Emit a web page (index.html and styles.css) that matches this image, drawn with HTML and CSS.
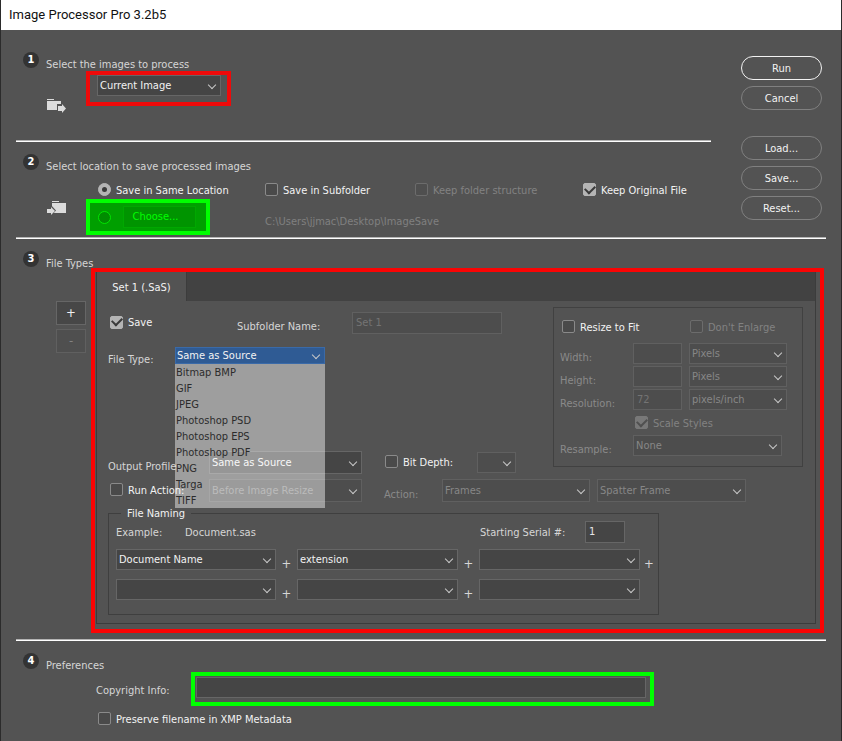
FILE: index.html
```html
<!DOCTYPE html>
<html lang="en">
    <head>
        <meta charset="utf-8">
        <title>Image Processor Pro 3.2b5</title>
        <link rel="stylesheet" href="styles.css">
    </head>
    <body>
        <div class="window">
            <h1 class="titlebar">Image Processor Pro 3.2b5</h1>

            <form class="content">
                <div class="top">
                    <div class="top-left">
                        <!-- step 1 -->
                        <section class="step step-first">
                            <div class="step-head">
                                <span class="badge">1</span>
                                <h2 class="step-title">Select the images to process</h2>
                            </div>
                            <div class="step-body source-body">
                                <svg class="folder folder-low" width="20" height="15" viewBox="0 0 20 15">
                                    <path d="M0 0h7v1H0zM0 2h14v9H0z" fill="#dcdcdc"/>
                                    <path d="M10 5h4V3l6 6.500l-6 5.500v-3h-4z" fill="#535353"/>
                                    <path d="M11 7h4V5l4 4.500l-4 4.500v-2h-4z" fill="#dcdcdc"/>
                                </svg>
                                <div class="mark mark-red mark-source">
                                    <span class="select select-source">
                                        <select aria-label="Images to process"><option>Current Image</option></select>
                                    </span>
                                </div>
                            </div>
                        </section>

                        <hr class="line">

                        <!-- step 2 -->
                        <section class="step">
                            <div class="step-head">
                                <span class="badge">2</span>
                                <h2 class="step-title">Select location to save processed images</h2>
                            </div>
                            <div class="step-body location-body">
                                <svg class="folder folder-mid" width="20" height="15" viewBox="0 0 20 15">
                                    <path d="M5 0h7v1H5zM5 2h14v10H5z" fill="#dcdcdc"/>
                                    <path d="M0 6h4V4l5 5.500l-5 5.500v-3H0z" fill="#535353"/>
                                    <path d="M0 8h4V6l4 4l-4 4v-2H0z" fill="#dcdcdc"/>
                                </svg>
                                <div class="location">
                                    <label class="check check-indent"><input type="radio" name="location" checked>Save in Same Location</label>
                                    <label class="check"><input type="checkbox">Save in Subfolder</label>
                                    <label class="check"><input type="checkbox" disabled>Keep folder structure</label>
                                    <label class="check"><input type="checkbox" checked>Keep Original File</label>
                                    <div class="mark mark-green mark-choose">
                                        <input type="radio" name="location" aria-label="Save in chosen folder">
                                        <button type="button" class="choose">Choose...</button>
                                    </div>
                                    <span class="path">C:\Users\jjmac\Desktop\ImageSave</span>
                                </div>
                            </div>
                        </section>
                    </div>

                    <div class="actions">
                        <button type="button" class="pill pill-main">Run</button>
                        <button type="button" class="pill">Cancel</button>
                        <button type="button" class="pill pill-gap">Load...</button>
                        <button type="button" class="pill">Save...</button>
                        <button type="button" class="pill">Reset...</button>
                    </div>
                </div>

                <hr class="line">

                <!-- step 3 -->
                <section class="step">
                    <div class="step-head">
                        <span class="badge">3</span>
                        <h2 class="step-title">File Types</h2>
                    </div>
                    <div class="types">
                        <div class="set-buttons">
                            <button type="button" class="square">+</button>
                            <button type="button" class="square" disabled>-</button>
                        </div>
                        <div class="mark mark-red mark-types">
                            <div class="panel">
                                <div class="tabs">
                                    <button type="button" class="tab">Set 1 (.SaS)</button>
                                </div>

                                <div class="panel-top">
                                    <div class="panel-form">
                                        <div class="row row-save">
                                            <label class="check save-check"><input type="checkbox" checked>Save</label>
                                            <label class="label" for="subfolder">Subfolder Name:</label>
                                            <input class="text" type="text" id="subfolder" value="Set 1" disabled>
                                        </div>
                                        <div class="row row-type">
                                            <label class="label" for="filetype">File Type:</label>
                                            <div class="open-list">
                                                <span class="select select-active">
                                                    <select id="filetype"><option>Same as Source</option></select>
                                                </span>
                                                <ul class="options">
                                                    <li>Bitmap BMP</li>
                                                    <li>GIF</li>
                                                    <li>JPEG</li>
                                                    <li>Photoshop PSD</li>
                                                    <li>Photoshop EPS</li>
                                                    <li>Photoshop PDF</li>
                                                    <li>PNG</li>
                                                    <li>Targa</li>
                                                    <li>TIFF</li>
                                                </ul>
                                            </div>
                                        </div>
                                        <div class="row row-profile">
                                            <label class="label" for="profile">Output Profile:</label>
                                            <span class="select select-tall">
                                                <select id="profile"><option>Same as Source</option></select>
                                            </span>
                                            <label class="check depth-check"><input type="checkbox">Bit Depth:</label>
                                            <span class="select">
                                                <select aria-label="Bit depth" disabled><option></option></select>
                                            </span>
                                        </div>
                                    </div>

                                    <div class="resize">
                                        <div class="resize-head">
                                            <label class="check"><input type="checkbox">Resize to Fit</label>
                                            <label class="check"><input type="checkbox" disabled>Don't Enlarge</label>
                                        </div>
                                        <div class="resize-grid">
                                            <label class="label dim" for="width">Width:</label>
                                            <input class="text" type="text" id="width" disabled>
                                            <span class="select">
                                                <select aria-label="Width unit" disabled><option>Pixels</option></select>
                                            </span>
                                            <label class="label dim" for="height">Height:</label>
                                            <input class="text" type="text" id="height" disabled>
                                            <span class="select">
                                                <select aria-label="Height unit" disabled><option>Pixels</option></select>
                                            </span>
                                            <label class="label dim" for="resolution">Resolution:</label>
                                            <input class="text" type="text" id="resolution" value="72" disabled>
                                            <span class="select">
                                                <select aria-label="Resolution unit" disabled><option>pixels/inch</option></select>
                                            </span>
                                        </div>
                                        <label class="check scale-check"><input type="checkbox" checked disabled>Scale Styles</label>
                                        <div class="resample">
                                            <label class="label dim" for="resample">Resample:</label>
                                            <span class="select">
                                                <select id="resample" disabled><option>None</option></select>
                                            </span>
                                        </div>
                                    </div>
                                </div>

                                <div class="row row-action">
                                    <label class="check check-run"><input type="checkbox">Run Action:</label>
                                    <span class="select select-tall">
                                        <select aria-label="When to run" disabled><option>Before Image Resize</option></select>
                                    </span>
                                    <label class="label dim action-label" for="action">Action:</label>
                                    <span class="select select-tall">
                                        <select id="action" disabled><option>Frames</option></select>
                                    </span>
                                    <span class="select select-tall action-name">
                                        <select aria-label="Action name" disabled><option>Spatter Frame</option></select>
                                    </span>
                                </div>

                                <fieldset class="naming">
                                    <legend>File Naming</legend>
                                    <div class="row naming-head">
                                        <span>Example:</span>
                                        <span>Document.sas</span>
                                        <label for="serial">Starting Serial #:</label>
                                        <input class="text" type="text" id="serial" value="1">
                                    </div>
                                    <div class="naming-grid">
                                        <span class="select"><select aria-label="Name part 1"><option>Document Name</option></select></span>
                                        <span class="label plus">+</span>
                                        <span class="select"><select aria-label="Name part 2"><option>extension</option></select></span>
                                        <span class="label plus">+</span>
                                        <span class="select"><select aria-label="Name part 3"><option></option></select></span>
                                        <span class="label plus">+</span>
                                        <span class="select"><select aria-label="Name part 4"><option></option></select></span>
                                        <span class="label plus">+</span>
                                        <span class="select"><select aria-label="Name part 5"><option></option></select></span>
                                        <span class="label plus">+</span>
                                        <span class="select"><select aria-label="Name part 6"><option></option></select></span>
                                    </div>
                                </fieldset>
                            </div>
                        </div>
                    </div>
                </section>

                <hr class="line">

                <!-- step 4 -->
                <section class="step">
                    <div class="step-head">
                        <span class="badge">4</span>
                        <h2 class="step-title">Preferences</h2>
                    </div>
                    <div class="prefs">
                        <div class="row copyright">
                            <label for="copyright">Copyright Info:</label>
                            <div class="mark mark-green mark-copyright">
                                <input class="text" type="text" id="copyright">
                            </div>
                        </div>
                        <label class="check xmp-check"><input type="checkbox">Preserve filename in XMP Metadata</label>
                    </div>
                </section>
            </form>
        </div>
    </body>
</html>
```
FILE: styles.css
```css
* {
    box-sizing: border-box;
    margin: 0;
    padding: 0;
}

body {
    background-color: #535353;
    color: #d6d6d6;
    font-family: Tahoma, "DejaVu Sans Condensed", sans-serif;
    font-size: 11px;
    line-height: 14px;
}

button,
input,
select {
    font: inherit;
    color: inherit;
}

.window {
    min-height: 100vh;
    border: 1px solid #2b2b2b;
    border-top: 0;
}

.titlebar {
    height: 30px;
    padding-left: 8px;
    background-color: #ffffff;
    color: #111111;
    font-family: "Segoe UI", Roboto, sans-serif;
    font-size: 13px;
    font-weight: 400;
    line-height: 30px;
}

.content {
    padding: 0 15px 14px;
}

.line {
    height: 2px;
    border: 0;
    border-top: 1px solid #b4b4b4;
    background-color: #ffffff;
}

/* steps */
.top {
    display: grid;
    grid-template-columns: minmax(0, 1fr) 115px;
}

.step {
    padding-top: 12px;
}

.step-first {
    padding-top: 22px;
}

.step-head {
    display: flex;
    gap: 7px;
    height: 19px;
    padding-left: 7px;
}

.badge {
    width: 16px;
    height: 16px;
    border-radius: 50%;
    background-color: #333333;
    color: #ffffff;
    font-weight: 700;
    line-height: 16px;
    text-align: center;
}

.step-title {
    margin-top: 6px;
    font-size: 11px;
    font-weight: 400;
}

.step-body {
    display: grid;
    grid-template-columns: 70px 1fr;
    align-items: start;
}

.source-body {
    min-height: 69px;
}

.location-body {
    padding: 10px 0 2px;
}

.folder {
    margin-left: 31px;
}

.folder-low {
    margin-top: 28px;
}

.folder-mid {
    margin-top: 18px;
}

/* coloured call-out frames */
.mark {
    border: 4px solid;
}

.mark-red {
    border-color: #ee0a0a;
}

.mark-green {
    border-color: #00ff00;
}

.mark-source {
    width: 145px;
    padding: 0 6px 6px 7px;
}

.mark-choose {
    display: flex;
    align-items: center;
    gap: 12px;
    width: 124px;
    height: 36px;
    padding-left: 8px;
    background-color: #009f00;
}

.choose {
    width: 73px;
    height: 22px;
    padding-right: 8px;
    border: 1px solid #00a800;
    background-color: #009400;
    color: #00ff00;
}

/* controls */
.check {
    display: flex;
    align-items: center;
    gap: 5px;
    color: #f2f2f2;
    white-space: nowrap;
}

.check input {
    margin-bottom: 2px;
}

.check-indent {
    padding-left: 12px;
}

.check:has(input:disabled) {
    color: #828282;
}

input[type="checkbox"],
input[type="radio"] {
    flex: none;
    display: grid;
    place-content: center;
    width: 13px;
    height: 13px;
    border: 1px solid #8a8a8a;
    border-radius: 2px;
    background-color: #4a4a4a;
    appearance: none;
}

input[type="radio"] {
    border-radius: 50%;
}

input[type="radio"]:checked {
    border-color: #b4b4b4;
    background-color: #b4b4b4;
}

input[type="radio"]:checked::before {
    content: "";
    width: 5px;
    height: 5px;
    border-radius: 50%;
    background-color: #3a3a3a;
}

input[type="checkbox"]:checked {
    border-color: #b4b4b4;
    background-color: #b4b4b4;
}

input[type="checkbox"]:checked::before {
    content: "";
    width: 8px;
    height: 5px;
    margin-bottom: 3px;
    border: solid #3a3a3a;
    border-width: 0 0 2px 2px;
    transform: rotate(-45deg);
}

input[type="checkbox"]:disabled {
    border-color: #6c6c6c;
    background-color: #4f4f4f;
}

input[type="checkbox"]:disabled:checked {
    border-color: #787878;
    background-color: #787878;
}

input[type="checkbox"]:disabled:checked::before {
    border-color: #505050;
}

.mark-choose input[type="radio"] {
    border-color: #00e600;
    background-color: #008c00;
}

.select {
    position: relative;
    display: block;
}

.select::after {
    content: "";
    position: absolute;
    top: 50%;
    right: 6px;
    width: 5px;
    height: 5px;
    margin-top: -4px;
    border: solid #c8c8c8;
    border-width: 0 1px 1px 0;
    transform: rotate(45deg);
    pointer-events: none;
}

.select select {
    display: block;
    width: 100%;
    height: 21px;
    padding: 1px 2px 0;
    border: 1px solid #666666;
    border-radius: 0;
    background-color: #454545;
    color: #f2f2f2;
    appearance: none;
}

.select select:disabled {
    border-color: #606060;
    background-color: #4d4d4d;
    color: #878787;
    opacity: 1;
}

.select-tall select {
    height: 23px;
}

.text {
    width: 100%;
    height: 22px;
    padding: 0 3px 1px;
    border: 1px solid #666666;
    background-color: #454545;
    color: #e6e6e6;
}

.text:disabled {
    border-color: #606060;
    background-color: #4d4d4d;
    color: #747474;
}

/* field labels sit a little below the middle of their field */
.label {
    margin-bottom: -8px;
    white-space: nowrap;
}

.dim {
    color: #8a8a8a;
}

.row {
    display: grid;
    align-items: center;
}

/* step 2 */
.location {
    display: grid;
    grid-template-columns: 179px 150px 168px 1fr;
    row-gap: 1px;
    align-items: center;
}

.path {
    grid-column: 2 / 4;
    padding-top: 10px;
    color: #808080;
}

.actions {
    display: flex;
    flex-direction: column;
    gap: 6px;
    padding: 26px 4px 0 30px;
}

.pill {
    height: 24px;
    padding-top: 2px;
    border: 1px solid #808080;
    border-radius: 12px;
    background-color: transparent;
    color: #f2f2f2;
}

.pill-main {
    border-color: #f2f2f2;
}

.pill-gap {
    margin-top: 20px;
}

/* step 3 */
.types {
    display: flex;
    margin: -2px 2px 6px 40px;
}

.set-buttons {
    display: flex;
    flex-direction: column;
    gap: 4px;
    width: 30px;
    margin: 33px 5px 0 0;
}

.square {
    height: 24px;
    border: 1px solid #666666;
    background-color: #474747;
    color: #f2f2f2;
    font-size: 13px;
}

.square:disabled {
    border-color: #606060;
    background-color: #4f4f4f;
    color: #828282;
}

.mark-types {
    flex: 1;
    padding: 0 4px 5px 1px;
    border-color: #fa0404;
}

.panel {
    border: 1px solid #3c3c3c;
    border-top: 0;
    padding-bottom: 8px;
}

.tabs {
    height: 29px;
    background-color: #424242;
}

.tab {
    width: 90px;
    height: 29px;
    padding-top: 2px;
    border: 0;
    border-right: 1px solid #3c3c3c;
    background-color: #535353;
    color: #f2f2f2;
}

.panel-top {
    display: grid;
    grid-template-columns: minmax(0, 1fr) 250px;
    padding-right: 12px;
}

.panel-form {
    padding: 11px 0 0 11px;
}

.row-save {
    grid-template-columns: 129px 115px 150px;
}

.save-check {
    padding-left: 2px;
}

.row-type {
    grid-template-columns: 67px 150px;
    margin-top: 13px;
}

.open-list {
    position: relative;
}

.select-active select {
    height: 17px;
    padding: 1px 1px 0;
    border-color: #3a6aa8;
    background-color: #2f5b94;
}

.options {
    position: absolute;
    top: 100%;
    left: 0;
    z-index: 1;
    width: 100%;
    padding-left: 1px;
    background-color: rgba(255, 255, 255, 0.44);
    color: #2c2c2c;
    line-height: 16px;
    list-style: none;
}

.options li {
    padding-top: 1px;
    line-height: 15px;
}

.row-profile {
    grid-template-columns: 101px 153px 115px 39px;
    margin-top: 87px;
}

.depth-check {
    padding-left: 23px;
}

.resize {
    height: 160px;
    margin-top: 6px;
    padding: 12px 0 0 6px;
    border: 1px solid #414141;
}

.resize-head {
    display: grid;
    grid-template-columns: 128px 1fr;
    padding-left: 2px;
}

.resize-grid {
    display: grid;
    grid-template-columns: 73px 49px 98px;
    row-gap: 2px;
    margin-top: 8px;
    align-items: center;
}

.resize-grid .select {
    margin-left: 7px;
    margin-right: -7px;
}

.resize-grid .text {
    height: 21px;
}

.scale-check {
    margin: 6px 0 4px 75px;
}

.resample {
    display: grid;
    grid-template-columns: 73px 149px;
    align-items: center;
}

.row-action {
    grid-template-columns: 101px 153px 80px 148px 156px;
    margin: 5px 0 0 11px;
}

.check-run {
    padding-left: 2px;
}

.action-label {
    padding-left: 22px;
}

.action-name {
    margin-left: 7px;
}

.naming {
    width: 551px;
    margin: 3px 0 0 11px;
    padding: 0 0 14px 7px;
    border: 1px solid #3f3f3f;
}

.naming legend {
    margin-left: 5px;
    padding: 2px 6px 0;
    color: #f2f2f2;
}

.naming-head {
    grid-template-columns: 69px 295px 105px 40px;
}

.naming-head span,
.naming-head label {
    padding-top: 2px;
}

.naming-grid {
    display: grid;
    grid-template-columns: 160px 21px 161px 21px 161px 18px;
    row-gap: 9px;
    align-items: center;
    margin-top: 6px;
}

.plus {
    font-size: 13px;
    text-align: center;
}

/* step 4 */
.prefs {
    padding-left: 80px;
}

.copyright {
    grid-template-columns: 95px 463px;
}

.copyright label {
    padding-top: 3px;
}

.mark-copyright {
    padding: 1px 4px 4px 1px;
}

.mark-copyright .text {
    height: 21px;
}

.xmp-check {
    margin-top: 6px;
    padding-left: 2px;
}
```
